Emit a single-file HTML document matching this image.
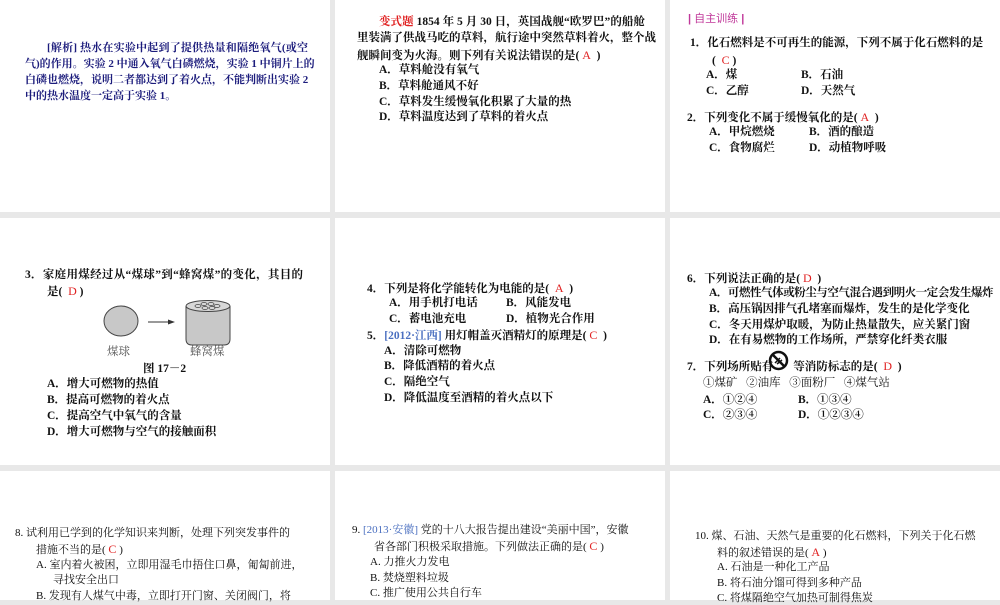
<!DOCTYPE html>
<html><head><meta charset="utf-8"><style>
*{margin:0;padding:0}
body{width:1000px;height:600px;background:#e8e8e8;position:relative;overflow:hidden;font-family:"Liberation Serif","Noto Serif CJK SC",serif;color:#111}
.p{position:absolute;background:#fff}
.l{position:absolute;white-space:nowrap;font-size:11.5px;line-height:14px;font-weight:bold}
.j{text-align:justify;text-align-last:justify}
.n{color:#1c1c7c;font-size:11px}
.r{color:#e02020;font-weight:normal;font-size:12px}
.rb{color:#e02020}
.b{color:#4a6fc0}
.c{font-family:"Liberation Serif","Noto Serif CJK SC",serif;font-weight:normal;font-size:11px}
</style></head><body>
<div class="p" style="left:0;top:0;width:330px;height:212px"></div>
<div class="p" style="left:335px;top:0;width:330px;height:212px"></div>
<div class="p" style="left:670px;top:0;width:330px;height:212px"></div>
<div class="p" style="left:0;top:218px;width:330px;height:247px"></div>
<div class="p" style="left:335px;top:218px;width:330px;height:247px"></div>
<div class="p" style="left:670px;top:218px;width:330px;height:247px"></div>
<div class="p" style="left:0;top:471px;width:330px;height:129px"></div>
<div class="p" style="left:335px;top:471px;width:330px;height:129px"></div>
<div class="p" style="left:670px;top:471px;width:330px;height:129px"></div>

<!-- panel 1 -->
<div class="l n j" style="left:47px;top:41px;width:261px">[解析] 热水在实验中起到了提供热量和隔绝氧气(或空</div>
<div class="l n j" style="left:25px;top:57px;width:283px">气)的作用。实验 2 中通入氧气白磷燃烧，实验 1 中铜片上的</div>
<div class="l n j" style="left:25px;top:73px;width:283px">白磷也燃烧，说明二者都达到了着火点，不能判断出实验 2</div>
<div class="l n" style="left:25px;top:89px">中的热水温度一定高于实验 1。</div>

<!-- panel 2 -->
<div class="l j" style="left:379px;top:15px;width:266px"><span class="rb">变式题</span> 1854 年 5 月 30 日，英国战舰“欧罗巴”的船舱</div>
<div class="l j" style="left:357px;top:31px;width:288px">里装满了供战马吃的草料，航行途中突然草料着火，整个战</div>
<div class="l" style="left:357px;top:48px">舰瞬间变为火海。则下列有关说法错误的是( <span class="r">A</span> &nbsp;)</div>
<div class="l" style="left:379px;top:63px">A．草料舱没有氧气</div>
<div class="l" style="left:379px;top:79px">B．草料舱通风不好</div>
<div class="l" style="left:379px;top:95px">C．草料发生缓慢氧化积累了大量的热</div>
<div class="l" style="left:379px;top:110px">D．草料温度达到了草料的着火点</div>

<!-- panel 3 -->
<div class="l" style="left:688px;top:12px;color:#c0389a;font-weight:normal;font-family:'Liberation Sans','Noto Sans CJK SC',sans-serif;font-size:11px"><b>|</b> 自主训练 <b>|</b></div>
<div class="l j" style="left:690px;top:36px;width:287px">1．化石燃料是不可再生的能源，下列不属于化石燃料的是</div>
<div class="l" style="left:712px;top:53px">( &nbsp;<span class="r">C</span> )</div>
<div class="l" style="left:706px;top:68px">A．煤</div><div class="l" style="left:801px;top:68px">B．石油</div>
<div class="l" style="left:706px;top:84px">C．乙醇</div><div class="l" style="left:801px;top:84px">D．天然气</div>
<div class="l" style="left:687px;top:110px">2．下列变化不属于缓慢氧化的是( <span class="r">A</span> &nbsp;)</div>
<div class="l" style="left:709px;top:125px">A．甲烷燃烧</div><div class="l" style="left:809px;top:125px">B．酒的酿造</div>
<div class="l" style="left:709px;top:141px">C．食物腐烂</div><div class="l" style="left:809px;top:141px">D．动植物呼吸</div>

<!-- row2 col1 -->
<div class="l j" style="left:25px;top:268px;width:278px">3．家庭用煤经过从“煤球”到“蜂窝煤”的变化，其目的</div>
<div class="l" style="left:47px;top:284px">是( &nbsp;<span class="r">D</span> )</div>
<svg style="position:absolute;left:95px;top:295px" width="145" height="65">
<ellipse cx="26" cy="26" rx="17" ry="15" fill="#c8c8c8" stroke="#444" stroke-width="1"/>
<line x1="53" y1="27" x2="76" y2="27" stroke="#333" stroke-width="1"/>
<polygon points="80,27 73,24.5 73,29.5" fill="#333"/>
<path d="M91 11 V44 Q91 50 97 50 H129 Q135 50 135 44 V11" fill="#c8c8c8" stroke="#444"/>
<ellipse cx="113" cy="11" rx="22" ry="5.5" fill="#d8d8d8" stroke="#444"/>
<g fill="none" stroke="#444" stroke-width=".8"><ellipse cx="103" cy="11" rx="3" ry="1.5"/><ellipse cx="109" cy="9" rx="3" ry="1.5"/><ellipse cx="116" cy="9" rx="3" ry="1.5"/><ellipse cx="122" cy="11" rx="3" ry="1.5"/><ellipse cx="110" cy="13" rx="3" ry="1.5"/><ellipse cx="117" cy="13" rx="3" ry="1.5"/></g>
</svg>
<div class="l" style="left:107px;top:345px;font-weight:normal;color:#555">煤球</div>
<div class="l" style="left:190px;top:345px;font-weight:normal;color:#555">蜂窝煤</div>
<div class="l" style="left:143px;top:362px">图 17－2</div>
<div class="l" style="left:47px;top:377px">A．增大可燃物的热值</div>
<div class="l" style="left:47px;top:393px">B．提高可燃物的着火点</div>
<div class="l" style="left:47px;top:409px">C．提高空气中氧气的含量</div>
<div class="l" style="left:47px;top:425px">D．增大可燃物与空气的接触面积</div>

<!-- row2 col2 -->
<div class="l" style="left:367px;top:281px">4．下列是将化学能转化为电能的是( &nbsp;<span class="r">A</span> &nbsp;)</div>
<div class="l" style="left:389px;top:296px">A．用手机打电话</div><div class="l" style="left:506px;top:296px">B．风能发电</div>
<div class="l" style="left:389px;top:312px">C．蓄电池充电</div><div class="l" style="left:506px;top:312px">D．植物光合作用</div>
<div class="l" style="left:367px;top:328px">5．<span class="b">[2012·江西]</span> 用灯帽盖灭酒精灯的原理是( <span class="r">C</span> &nbsp;)</div>
<div class="l" style="left:384px;top:344px">A．清除可燃物</div>
<div class="l" style="left:384px;top:359px">B．降低酒精的着火点</div>
<div class="l" style="left:384px;top:375px">C．隔绝空气</div>
<div class="l" style="left:384px;top:391px">D．降低温度至酒精的着火点以下</div>

<!-- row2 col3 -->
<div class="l" style="left:687px;top:271px">6．下列说法正确的是( <span class="r">D</span> &nbsp;)</div>
<div class="l" style="left:709px;top:286px;letter-spacing:-0.45px">A．可燃性气体或粉尘与空气混合遇到明火一定会发生爆炸</div>
<div class="l" style="left:709px;top:302px">B．高压锅因排气孔堵塞而爆炸，发生的是化学变化</div>
<div class="l" style="left:709px;top:318px">C．冬天用煤炉取暖，为防止热量散失，应关紧门窗</div>
<div class="l" style="left:709px;top:333px">D．在有易燃物的工作场所，严禁穿化纤类衣服</div>
<div class="l" style="left:687px;top:359px">7．下列场所贴有<span style="display:inline-block;width:20px"></span>等消防标志的是( &nbsp;<span class="r">D</span> &nbsp;)</div>
<svg style="position:absolute;left:768px;top:350px" width="21" height="21"><circle cx="10.5" cy="10.5" r="8.5" fill="none" stroke="#111" stroke-width="2.5"/><line x1="4.5" y1="4.5" x2="16.5" y2="16.5" stroke="#111" stroke-width="2.5"/><path d="M7 13 L12 8 M9 14 L14 10" stroke="#111" stroke-width="1.5"/></svg>
<div class="l" style="left:703px;top:376px;font-weight:normal">①煤矿 &nbsp; ②油库 &nbsp; ③面粉厂 &nbsp; ④煤气站</div>
<div class="l" style="left:703px;top:393px">A．①②④</div><div class="l" style="left:798px;top:393px">B．①③④</div>
<div class="l" style="left:703px;top:408px">C．②③④</div><div class="l" style="left:798px;top:408px">D．①②③④</div>

<!-- row3 -->
<div class="l c" style="left:15px;top:526px">8. 试利用已学到的化学知识来判断，处理下列突发事件的</div>
<div class="l c" style="left:36px;top:542px">措施不当的是( <span class="r">C</span> )</div>
<div class="l c" style="left:36px;top:558px">A. 室内着火被困，立即用湿毛巾捂住口鼻，匍匐前进，</div>
<div class="l c" style="left:53px;top:573px">寻找安全出口</div>
<div class="l c" style="left:36px;top:589px">B. 发现有人煤气中毒，立即打开门窗、关闭阀门，将</div>

<div class="l c" style="left:352px;top:523px">9. <span class="b">[2013·安徽]</span> 党的十八大报告提出建设“美丽中国”，安徽</div>
<div class="l c" style="left:374px;top:539px">省各部门积极采取措施。下列做法正确的是( <span class="r">C</span> )</div>
<div class="l c" style="left:370px;top:555px">A. 力推火力发电</div>
<div class="l c" style="left:370px;top:571px">B. 焚烧塑料垃圾</div>
<div class="l c" style="left:370px;top:586px">C. 推广使用公共自行车</div>

<div class="l c" style="left:695px;top:529px">10. 煤、石油、天然气是重要的化石燃料，下列关于化石燃</div>
<div class="l c" style="left:717px;top:545px">料的叙述错误的是( <span class="r">A</span> )</div>
<div class="l c" style="left:717px;top:560px">A. 石油是一种化工产品</div>
<div class="l c" style="left:717px;top:576px">B. 将石油分馏可得到多种产品</div>
<div class="l c" style="left:717px;top:591px">C. 将煤隔绝空气加热可制得焦炭</div>
</body></html>
